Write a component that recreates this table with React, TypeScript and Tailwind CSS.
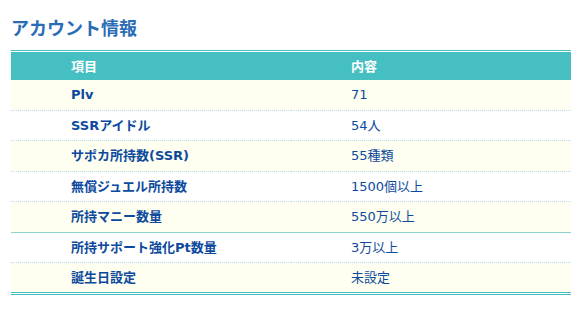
import React from 'react';

const rows: [string, string][] = [
  ['Plv', '71'],
  ['SSRアイドル', '54人'],
  ['サポカ所持数(SSR)', '55種類'],
  ['無償ジュエル所持数', '1500個以上'],
  ['所持マニー数量', '550万以上'],
  ['所持サポート強化Pt数量', '3万以上'],
  ['誕生日設定', '未設定'],
];

export default function App() {
  return (
    <div
      className="min-h-[317px] w-[578px] bg-white pl-[11px] pt-[17px]"
      style={{ fontFamily: '"DejaVu Sans", "Noto Sans CJK JP", sans-serif' }}
    >
      <h2 className="text-[18px] font-bold leading-[24px] text-[#2a6cb5]">アカウント情報</h2>
      <table className="mt-[9px] w-[560px] border-collapse border-t-[3px] border-b-[3px] border-double border-[#45bfc2] text-[13px]">
        <thead>
          <tr className="h-[28px] bg-[#45bfc2] text-white">
            <th className="w-1/2 pl-[60px] text-left font-bold">項目</th>
            <th className="w-1/2 pl-[60px] text-left font-bold">内容</th>
          </tr>
        </thead>
        <tbody>
          {rows.map(([label, value], i) => (
            <tr
              key={label}
              className={`h-[30.5px] ${i % 2 === 0 ? 'bg-[#fefff0]' : 'bg-white'} ${
                i === 4
                  ? 'border-b border-solid border-[#8fd0d2]'
                  : i === rows.length - 1
                  ? ''
                  : 'border-b border-dotted border-[#b8dfe2]'
              }`}
            >
              <td className="pl-[60px] font-bold text-[#0d4a9e]">{label}</td>
              <td className="pl-[60px] text-[#0d4a9e]">{value}</td>
            </tr>
          ))}
        </tbody>
      </table>
    </div>
  );
}
